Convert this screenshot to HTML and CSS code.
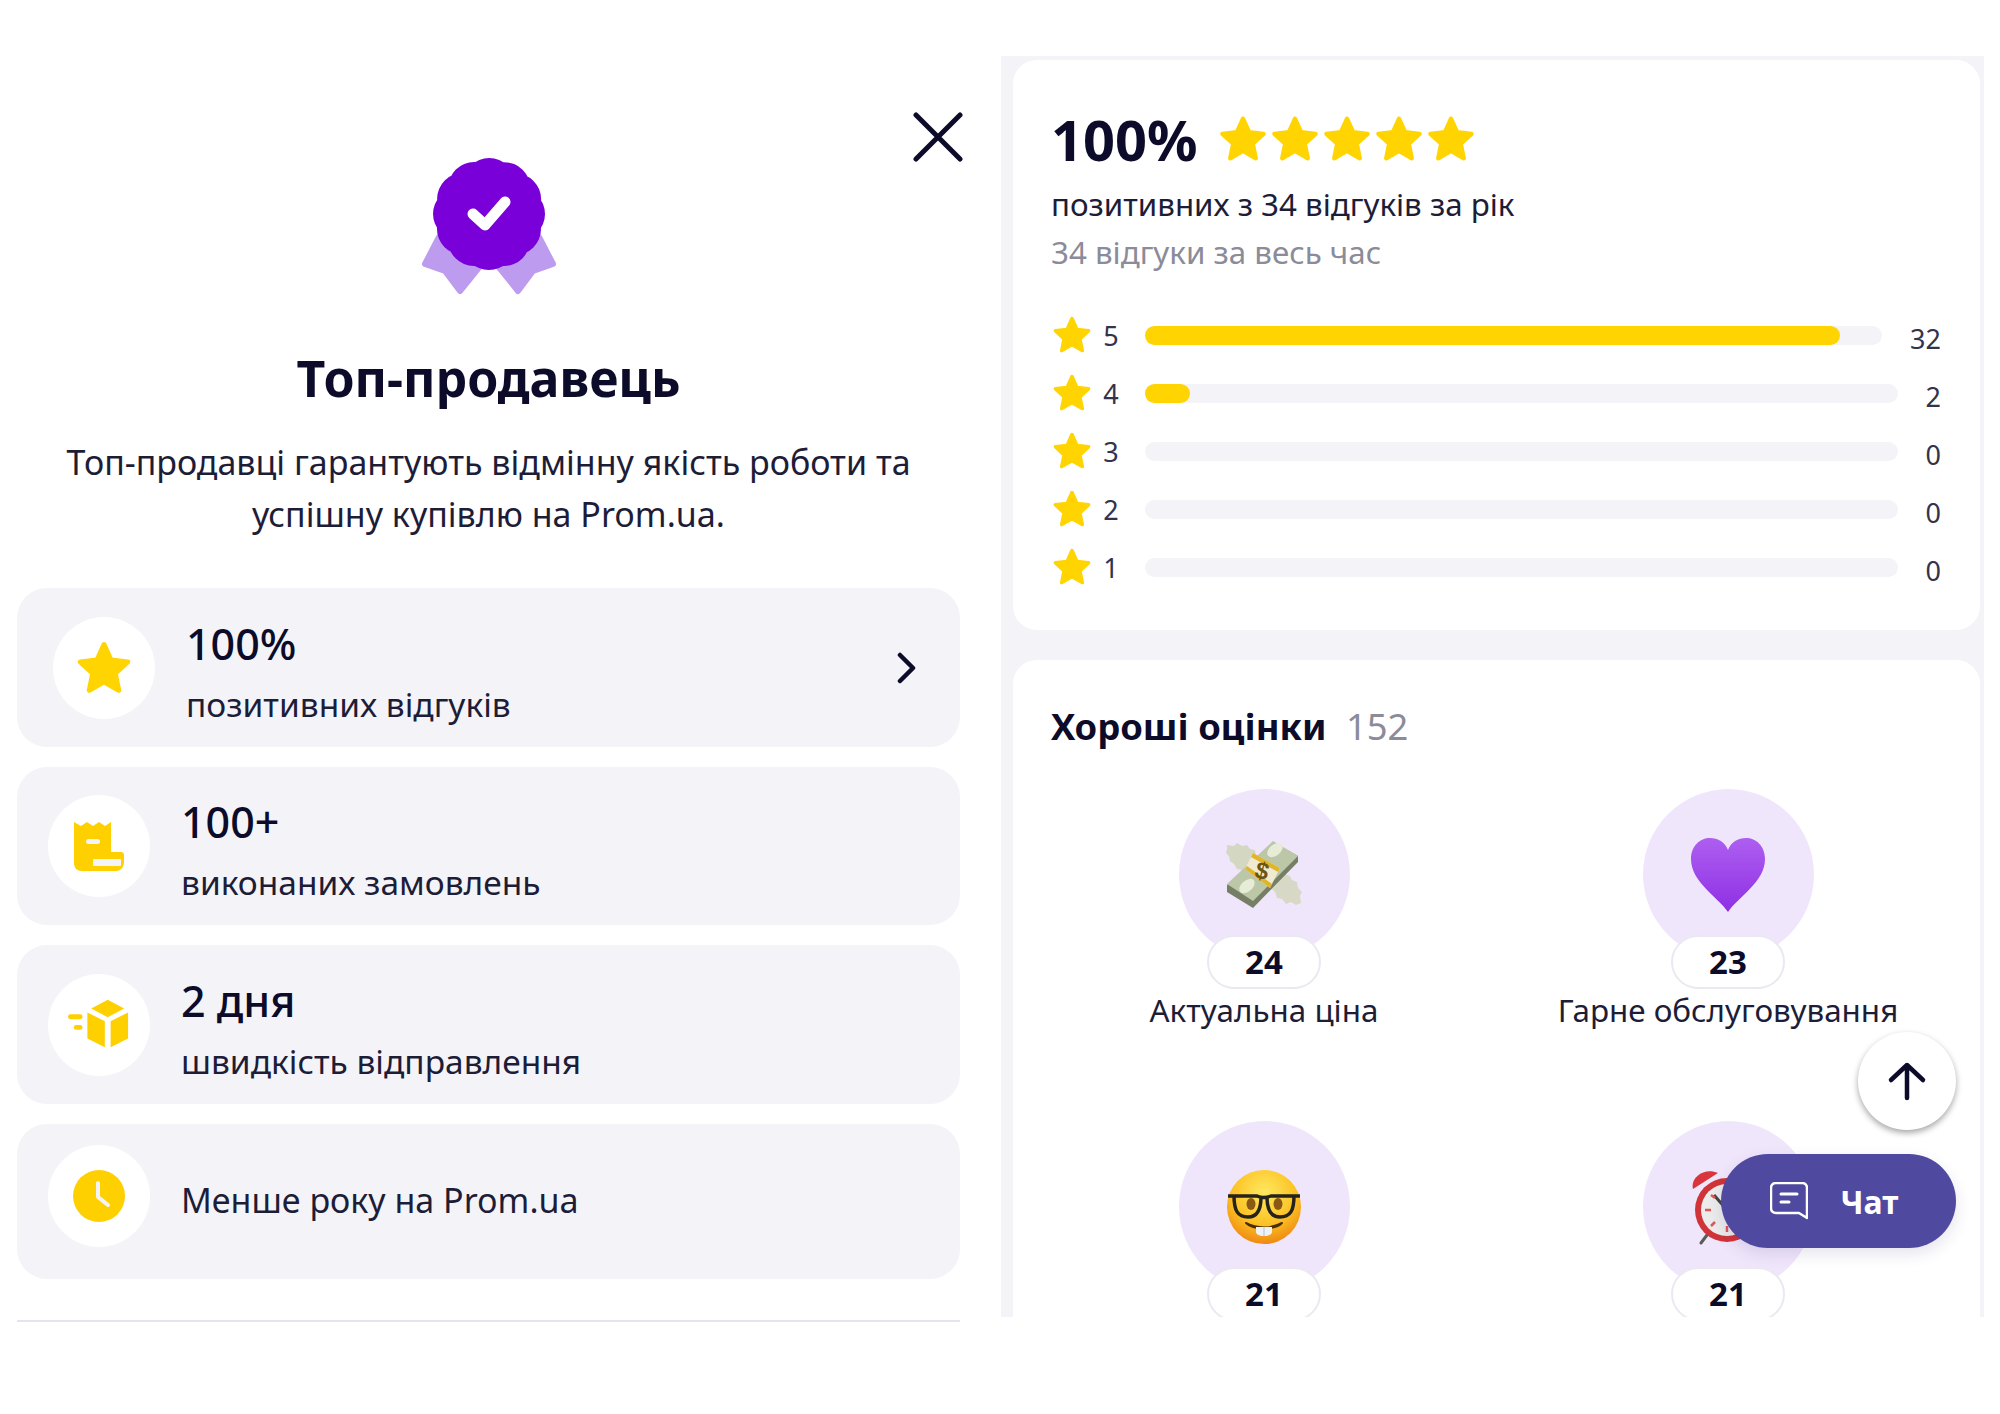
FILE: index.html
```html
<!DOCTYPE html>
<html lang="uk">
<head>
<meta charset="utf-8">
<title>Топ-продавець</title>
<link rel="stylesheet" href="styles.css">
</head>
<body>
<svg class="defs" width="0" height="0" aria-hidden="true">
  <defs>
    <symbol id="star" viewBox="0 0 24 24"><path d="M12 2.600l2.800 6.200 6.700.8-5 4.600 1.400 6.700-5.900-3.400-5.900 3.400 1.400-6.700-5-4.600 6.700-.8z" fill="#ffd400" stroke="#ffd400" stroke-width="2" stroke-linejoin="round"/></symbol>
    <radialGradient id="face" cx="50%" cy="30%" r="72%"><stop offset="0" stop-color="#ffe860"/><stop offset=".6" stop-color="#fcc224"/><stop offset="1" stop-color="#ee8410"/></radialGradient>
    <linearGradient id="heart" x1="0" y1="0" x2="0" y2="1"><stop offset="0" stop-color="#ad5ff0"/><stop offset="1" stop-color="#8f2fe4"/></linearGradient>
  </defs>
</svg>
<main class="page">
  <section class="left">
    <button class="close" aria-label="Закрити"><svg viewBox="0 0 50 50"><path d="M3 3l44 44M47 3L3 47" fill="none" stroke="#0c0c2a" stroke-width="5" stroke-linecap="round"/></svg></button>
    <svg class="badge" viewBox="0 0 136 140">
      <path d="M18 80L4 107l20 7 15 20 29-36 29 36 15-20 20-7-14-27z" fill="#bd9bee" stroke="#bd9bee" stroke-width="6" stroke-linejoin="round"/>
      <circle cx="68" cy="57" r="42" fill="#7a00d9"/>
      <circle cx="68" cy="57" r="30" fill="none" stroke="#7a00d9" stroke-width="52" stroke-linecap="round" stroke-dasharray="0 15.708"/>
      <path d="M52 57l12 11 20-23" fill="none" stroke="#fff" stroke-width="11" stroke-linecap="round" stroke-linejoin="round"/>
    </svg>
    <h1 class="title">Топ-продавець</h1>
    <p class="lead">Топ-продавці гарантують відмінну якість роботи та успішну купівлю на Prom.ua.</p>
    <div class="stats">
      <div class="stat stat-link">
        <span class="stat-icon"><svg class="star-lg" viewBox="0 0 24 24"><use href="#star"/></svg></span>
        <div class="stat-text"><strong>100%</strong><span>позитивних відгуків</span></div>
        <svg class="chevron" viewBox="0 0 20 32"><path d="M4 3l13 13L4 29" fill="none" stroke="#0c0c2a" stroke-width="4.500" stroke-linecap="round" stroke-linejoin="round"/></svg>
      </div>
      <div class="stat">
        <span class="stat-icon"><svg class="ico" viewBox="0 0 52 52"><path d="M1 2l7 4 6-4 6 4 6-4 6 4 6-4v30h10c2 0 3 1 3 3v7c0 5-3 9-8 9H9c-5 0-8-3-8-8z" fill="#ffd000"/><rect x="13" y="19" width="14" height="5" rx="2.500" fill="#f4f4f8"/><rect x="20" y="39" width="28" height="7" rx="1" fill="#f4f4f8"/></svg></span>
        <div class="stat-text"><strong>100+</strong><span>виконаних замовлень</span></div>
      </div>
      <div class="stat stat-tall">
        <span class="stat-icon"><svg class="ico ico-wide" viewBox="0 0 64 52"><path d="M41 0l17 9-17 9-17-9z" fill="#ffd000"/><path d="M20 13l18 9v27l-18-9zM62 13L44 22v27l18-9z" fill="#ffd000"/><rect x="0" y="15" width="15" height="5" rx="2.500" fill="#ffd000"/><rect x="6" y="26" width="9" height="5" rx="2.500" fill="#ffd000"/></svg></span>
        <div class="stat-text"><strong>2 дня</strong><span>швидкість відправлення</span></div>
      </div>
      <div class="stat stat-plain">
        <span class="stat-icon"><svg class="ico" viewBox="0 0 52 52"><circle cx="26" cy="26" r="26" fill="#ffd000"/><path d="M25 13v14l10 8" fill="none" stroke="#f4f4f8" stroke-width="4" stroke-linecap="round" stroke-linejoin="round"/></svg></span>
        <div class="stat-text"><span>Менше року на Prom.ua</span></div>
      </div>
    </div>
    <hr class="rule">
  </section>

  <section class="right">
    <article class="card summary">
      <div class="score"><strong>100%</strong>
        <span class="score-stars">
          <svg viewBox="0 0 24 24"><use href="#star"/></svg><svg viewBox="0 0 24 24"><use href="#star"/></svg><svg viewBox="0 0 24 24"><use href="#star"/></svg><svg viewBox="0 0 24 24"><use href="#star"/></svg><svg viewBox="0 0 24 24"><use href="#star"/></svg>
        </span>
      </div>
      <p class="summary-main">позитивних з 34 відгуків за рік</p>
      <p class="summary-sub">34 відгуки за весь час</p>
      <div class="bars">
        <div class="bar-row"><svg class="bar-star" viewBox="0 0 24 24"><use href="#star"/></svg><span class="bar-num">5</span><span class="bar"><i class="fill" style="width:94.300%"></i></span><span class="bar-count">32</span></div>
        <div class="bar-row"><svg class="bar-star" viewBox="0 0 24 24"><use href="#star"/></svg><span class="bar-num">4</span><span class="bar"><i class="fill" style="width:6%"></i></span><span class="bar-count">2</span></div>
        <div class="bar-row"><svg class="bar-star" viewBox="0 0 24 24"><use href="#star"/></svg><span class="bar-num">3</span><span class="bar"></span><span class="bar-count">0</span></div>
        <div class="bar-row"><svg class="bar-star" viewBox="0 0 24 24"><use href="#star"/></svg><span class="bar-num">2</span><span class="bar"></span><span class="bar-count">0</span></div>
        <div class="bar-row"><svg class="bar-star" viewBox="0 0 24 24"><use href="#star"/></svg><span class="bar-num">1</span><span class="bar"></span><span class="bar-count">0</span></div>
      </div>
    </article>
    <article class="card ratings">
      <h2 class="ratings-head">Хороші оцінки <span>152</span></h2>
      <div class="grid">
        <div class="item">
          <span class="bubble"><svg class="emoji emoji-money" viewBox="0 0 80 80">
            <path d="M3 10l7 1 3-3 5 3 5-1 3 4 5 1 1 6 4 4-12 14-6-4-5-1-3-5-4-3-1-5-3-3 1-4z" fill="#d4d7c2"/>
            <path d="M55 38l6 1 5 2 2 4 5 2 1 6 4 4-2 4 1 7-5 2-5-3-5 2-4-5-5-1-2-6-5-5z" fill="#d7d9c6"/>
            <path d="M3 50L49 7l25 14v6L29 73 3 57z" fill="#767f66"/>
            <path d="M3 49L49 6l25 15-45 45z" fill="#bcc7a8"/>
            <ellipse cx="51" cy="15" rx="9" ry="5.500" fill="#e6ecd6" transform="rotate(-40 51 15)"/>
            <ellipse cx="23" cy="51" rx="9" ry="5.500" fill="#e6ecd6" transform="rotate(-40 23 51)"/>
            <path d="M29 18l27 15-10 20-25-19z" fill="#f0ead0"/>
            <path d="M29 18l27 15-2 4-27-15zM21 34l25 19 2-4-25-18z" fill="#e0b52c"/>
            <text x="38" y="44" class="emoji-dollar" transform="rotate(15 38 36)">$</text>
          </svg></span>
          <span class="pill">24</span>
          <span class="item-label">Актуальна ціна</span>
        </div>
        <div class="item">
          <span class="bubble"><svg class="emoji" viewBox="0 0 76 76"><path d="M38 75C28 60 1 45 1 22 1 9 10 1 20 1c8 0 15 4 18 12C41 5 48 1 56 1c10 0 19 8 19 21 0 23-27 38-37 53z" fill="url(#heart)"/></svg></span>
          <span class="pill">23</span>
          <span class="item-label">Гарне обслуговування</span>
        </div>
        <div class="item">
          <span class="bubble"><svg class="emoji" viewBox="0 0 76 76">
            <circle cx="38" cy="38" r="37" fill="url(#face)"/>
            <ellipse cx="25" cy="35" rx="4.500" ry="6" fill="#8a5a14"/><ellipse cx="52" cy="35" rx="4.500" ry="6" fill="#8a5a14"/>
            <path d="M2 27h29c4 2 9 2 14 0h29M8 27c0 15 4 21 14 21 9 0 13-7 13-20M68 27c0 15-4 21-14 21-9 0-13-7-13-20" fill="none" stroke="#26221c" stroke-width="3.500" stroke-linejoin="round"/>
            <path d="M20 54c11 6 25 6 36 0-7 7-29 7-36 0z" fill="#4a2e0c" stroke="#4a2e0c" stroke-width="2" stroke-linejoin="round"/>
            <path d="M30 58h16v5c0 2-3 4-8 4s-8-2-8-4z" fill="#eef2f6"/><path d="M38 58v9" stroke="#b8bfc8"/>
          </svg></span>
          <span class="pill">21</span>
        </div>
        <div class="item">
          <span class="bubble"><svg class="emoji" viewBox="0 0 76 76">
            <path d="M3 20C0 9 14 -2 28 4z" fill="#d8363c"/><path d="M46 4c11-4 24 5 24 16z" fill="#b8b8b8"/>
            <path d="M17 66l-6 8M57 66l6 8" stroke="#5a5a5a" stroke-width="3" stroke-linecap="round"/>
            <circle cx="37" cy="41" r="32" fill="#d03438"/><circle cx="37" cy="41" r="26" fill="#ececec"/>
            <path d="M37 41L24 26" stroke="#444" stroke-width="3"/><path d="M15 41h6M37 63v-6M21 57l4-4M21 26l4 3" stroke="#e0565a" stroke-width="2.500"/>
          </svg></span>
          <span class="pill">21</span>
        </div>
      </div>
    </article>
    <button class="to-top" aria-label="Вгору"><svg viewBox="0 0 40 40"><path d="M20 37V4M4 19L20 4l16 15" fill="none" stroke="#0c0c2a" stroke-width="4.500" stroke-linecap="round" stroke-linejoin="round"/></svg></button>
    <button class="chat"><svg viewBox="0 0 38 38"><path d="M6 1h26c3 0 5 2 5 5v30l-8-5H6c-3 0-5-2-5-5V6c0-3 2-5 5-5z" fill="none" stroke="#fff" stroke-width="2.500" stroke-linejoin="round"/><path d="M11 12h16M11 20h8" stroke="#fff" stroke-width="3" stroke-linecap="round"/></svg><span>Чат</span></button>
  </section>
</main>
</body>
</html>
```
FILE: styles.css
```css
* { box-sizing: border-box; }
html, body { margin: 0; background: #fff; }
body { font-family: "Noto Sans", "Open Sans", sans-serif; color: #0c0c2a; width: 2000px; height: 1414px; overflow: hidden; }
p, h1, h2 { margin: 0; }
button { border: 0; padding: 0; font: inherit; cursor: pointer; }
.defs { position: absolute; }

.page { display: flex; padding-top: 56px; }

/* left column */
.left { position: relative; width: 1001px; padding: 101px 41px 0 17px; display: flex; flex-direction: column; align-items: stretch; }
.close { position: absolute; top: 56px; left: 913px; width: 50px; height: 50px; background: none; }
.close svg { display: block; }
.badge { display: block; width: 136px; height: 140px; align-self: center; }
.title { font-size: 50px; line-height: 60px; font-weight: 700; text-align: center; margin-top: 51px; }
.lead { font-size: 34px; line-height: 52px; text-align: center; margin: 28px 30px 0; color: #1d1d38; }
.stats { display: flex; flex-direction: column; gap: 20px; margin-top: 48px; }
.stat { display: flex; align-items: center; gap: 31px; background: #f4f4f8; border-radius: 30px; padding: 28px 31px; height: 158px; }
.stat-link { padding-left: 36px; height: 159px; }
.stat-tall { height: 159px; }
.stat-plain { height: 155px; padding-top: 21px; padding-bottom: 32px; }
.stat-icon { flex: none; width: 102px; height: 102px; border-radius: 50%; background: #fff; display: flex; align-items: center; justify-content: center; }
.star-lg { width: 60px; height: 60px; }
.ico { width: 52px; height: 52px; }
.ico-wide { width: 62px; }
.stat-text { flex: 1; display: flex; flex-direction: column; margin-top: 14px; font-size: 33.5px; line-height: 58px; color: #1d1d38; }
.stat-text strong { font-size: 43px; font-weight: 500; color: #0c0c2a; margin: -2px 0 2px; }
.stat-plain .stat-text { margin-top: 8px; font-size: 34px; }
.chevron { width: 20px; height: 32px; margin-right: 13px; }

.rule { border: 0; border-top: 2px solid #e4e4ec; margin: 41px 0 0; }

/* right column */
.right { position: relative; width: 983px; height: 1261px; overflow: hidden; background: #f4f4f8; padding: 4px 4px 0 12px; display: flex; flex-direction: column; gap: 30px; }
.card { background: #fff; border-radius: 24px; flex: none; }
.summary { padding: 47px 39px 34px 38px; }
.score { display: flex; align-items: center; gap: 19px; height: 64px; }
.score strong { font-size: 56px; line-height: 64px; font-weight: 700; }
.score-stars { display: flex; margin-top: -1px; }
.score-stars svg { width: 52px; height: 52px; }
.summary-main { font-size: 31.3px; line-height: 46px; margin-top: 10px; color: #1d1d38; }
.summary-sub { font-size: 31.3px; line-height: 46px; margin-top: 2px; color: #8b8b99; }
.bars { margin-top: 31px; display: flex; flex-direction: column; }
.bar-row { display: flex; align-items: center; height: 58px; gap: 26px; }
.bar-star { flex: none; width: 42px; height: 42px; }
.bar-num { flex: none; width: 16px; font-size: 27px; line-height: 1; margin-left: -16px; color: #33334c; text-align: center; }
.bar { position: relative; flex: 1; height: 19px; background: #f4f4f8; border-radius: 10px; }
.fill { display: block; height: 100%; background: #ffd400; border-radius: 10px; }
.bar-count { flex: none; font-size: 27px; line-height: 1; padding-top: 6px; margin-left: 2px; color: #33334c; }

.ratings { padding: 42px 38px 0; height: 700px; }
.ratings-head { font-size: 36.4px; line-height: 48px; font-weight: 700; color: #0c0c2a; }
.ratings-head span { font-weight: 400; color: #8b8b99; margin-left: 10px; }
.grid { display: grid; grid-template-columns: 464px 464px; grid-auto-rows: 332px; margin: 39px 0 0 -19px; }
.item { display: flex; flex-direction: column; align-items: center; }
.bubble { width: 171px; height: 171px; border-radius: 50%; background: #f0e6fb; display: flex; align-items: center; justify-content: center; }
.emoji { width: 76px; height: 76px; }
.emoji-money { width: 80px; height: 80px; }
.emoji-dollar { font: 700 24px "Liberation Sans", sans-serif; fill: #6d5410; text-anchor: middle; }
.pill { width: 114px; height: 54px; margin-top: -25px; background: #fff; border: 2px solid #ebe8f1; border-radius: 27px; text-align: center; font-size: 33px; line-height: 50px; font-weight: 700; position: relative; }
.item-label { font-size: 31.4px; line-height: 46px; margin-top: -2px; color: #1d1d38; white-space: nowrap; }

.to-top { position: absolute; left: 857px; top: 976px; width: 98px; height: 98px; border-radius: 50%; background: #fff; box-shadow: 0 3px 6px rgba(0,0,0,.35); display: flex; align-items: center; justify-content: center; }
.to-top svg { width: 40px; height: 40px; }
.chat { position: absolute; left: 720px; top: 1098px; width: 235px; height: 94px; padding-right: 9px; border-radius: 47px; background: #4f4a9f; color: #fff; display: flex; align-items: center; justify-content: center; gap: 33px; font-size: 32px; font-weight: 700; box-shadow: 0 6px 16px rgba(40,36,110,.12); }
.chat svg { width: 38px; height: 38px; }
```
